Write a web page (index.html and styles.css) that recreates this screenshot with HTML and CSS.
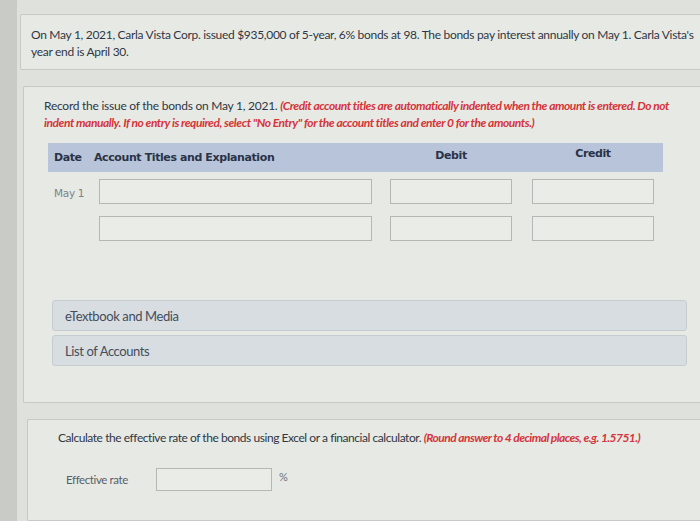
FILE: index.html
```html
<!DOCTYPE html>
<html lang="en">
<head>
<meta charset="utf-8">
<title>Bonds question</title>
<link rel="stylesheet" href="styles.css">
</head>
<body>
<div class="screen">
  <section class="card intro">
    <p class="q">On May 1, 2021, Carla Vista Corp. issued $935,000 of 5-year, 6% bonds at 98. The bonds pay interest annually on May 1. Carla Vista's<br>year end is April 30.</p>
  </section>

  <section class="card part">
    <p class="q instr">Record the issue of the bonds on May 1, 2021. <em class="note">(Credit account titles are automatically indented when the amount is entered. Do not<br>indent manually. If no entry is required, select "No Entry" for the account titles and enter 0 for the amounts.)</em></p>

    <div class="journal">
      <div class="jhead">
        <span class="h-date">Date</span>
        <span class="h-acct">Account Titles and Explanation</span>
        <span class="h-num">Debit</span>
        <span class="h-num h-cr">Credit</span>
      </div>
      <div class="jrow">
        <span class="date">May 1</span>
        <span class="box acct"></span>
        <span class="box num"></span>
        <span class="box num cr"></span>
      </div>
      <div class="jrow">
        <span class="date"></span>
        <span class="box acct"></span>
        <span class="box num"></span>
        <span class="box num cr"></span>
      </div>
    </div>

    <div class="links">
      <div class="link">eTextbook and Media</div>
      <div class="link">List of Accounts</div>
    </div>
  </section>

  <section class="card part3">
    <p class="q calc">Calculate the effective rate of the bonds using Excel or a financial calculator. <em class="note">(Round answer to 4 decimal places, e.g. 1.5751.)</em></p>
    <div class="rate">
      <span class="rate-label">Effective rate</span>
      <span class="box rate-box"></span>
      <span class="pct">%</span>
    </div>
  </section>
</div>
</body>
</html>
```

FILE: styles.css
```css
html, body {
  margin: 0;
  padding: 0;
  width: 700px;
  height: 521px;
  overflow: hidden;
}
body {
  background: #dfe2dc;
  font-family: "Lato", "Liberation Sans", sans-serif;
  color: #2f3744;
}
.screen {
  height: 521px;
  border-left: 17px solid #c9cbc6;
  padding-top: 14px;
  box-sizing: border-box;
  display: flex;
  flex-direction: column;
  gap: 16px;
}
.card {
  background: #e7eae4;
  border: 1px solid #c6c9c4;
  border-right: none;
  border-radius: 2px 0 0 2px;
  box-sizing: border-box;
}
.q {
  margin: 0;
  font-size: 12px;
  line-height: 17px;
  letter-spacing: -0.3px;
  white-space: nowrap;
}
.intro {
  margin-left: 3px;
  height: 56px;
  padding: 11px 0 0 10px;
}
.part {
  margin-left: 6px;
  height: 317px;
  padding: 10px 0 0 20px;
}
.instr { letter-spacing: -0.25px; }
.note {
  color: #d5343b;
  font-weight: 700;
  font-style: italic;
  letter-spacing: -0.45px;
}
.journal {
  margin-top: 12px;
  width: 615px;
  margin-left: 4px;
}
.jhead, .jrow {
  display: grid;
  grid-template-columns: 46px 296px 140px 133px;
  align-items: center;
}
.jhead {
  height: 29px;
  background: #b7c4da;
  font-family: "DejaVu Sans", sans-serif;
  font-weight: 700;
  font-size: 11px;
  color: #2a3346;
  letter-spacing: -0.4px;
}
.h-date { padding-left: 6px; }
.h-num { width: 122px; text-align: center; margin-top: -4px; }
.h-cr { margin-left: 2px; margin-top: -8px; }
.jrow { margin-top: 7px; height: 25px; }
.jrow + .jrow { margin-top: 12px; }
.date {
  padding-left: 6px;
  font-family: "DejaVu Sans", sans-serif;
  font-size: 10.5px;
  color: #7d828a;
  letter-spacing: -0.3px;
  padding-top: 2px;
}
.box {
  display: block;
  height: 25px;
  box-sizing: border-box;
  border: 1px solid #b4b8b4;
  background: #eaece7;
}
.acct { width: 273px; margin-left: 5px; }
.num { width: 122px; }
.num.cr { margin-left: 2px; }
.links {
  margin-top: 59px;
  margin-left: 8px;
  margin-right: 13px;
  display: flex;
  flex-direction: column;
  gap: 4px;
}
.link {
  height: 31px;
  box-sizing: border-box;
  background: #d7dde1;
  border: 1px solid #c6ccd0;
  border-radius: 3px;
  display: flex;
  align-items: center;
  padding-left: 12px;
  font-size: 13px;
  letter-spacing: -0.4px;
  color: #454d5a;
}
.part3 {
  margin-left: 10px;
  flex: 1;
  padding: 9px 0 0 30px;
}
.calc { letter-spacing: -0.45px; }
.calc .note { letter-spacing: -0.55px; }
.rate {
  margin-top: 22px;
  margin-left: 8px;
  display: flex;
  align-items: center;
}
.rate-label {
  width: 90px;
  font-size: 11.5px;
  letter-spacing: -0.4px;
  color: #575e69;
}
.rate-box {
  width: 116px;
  height: 23px;
}
.pct {
  margin-left: 7px;
  font-size: 11px;
  color: #6a707a;
  margin-top: -6px;
}
```
